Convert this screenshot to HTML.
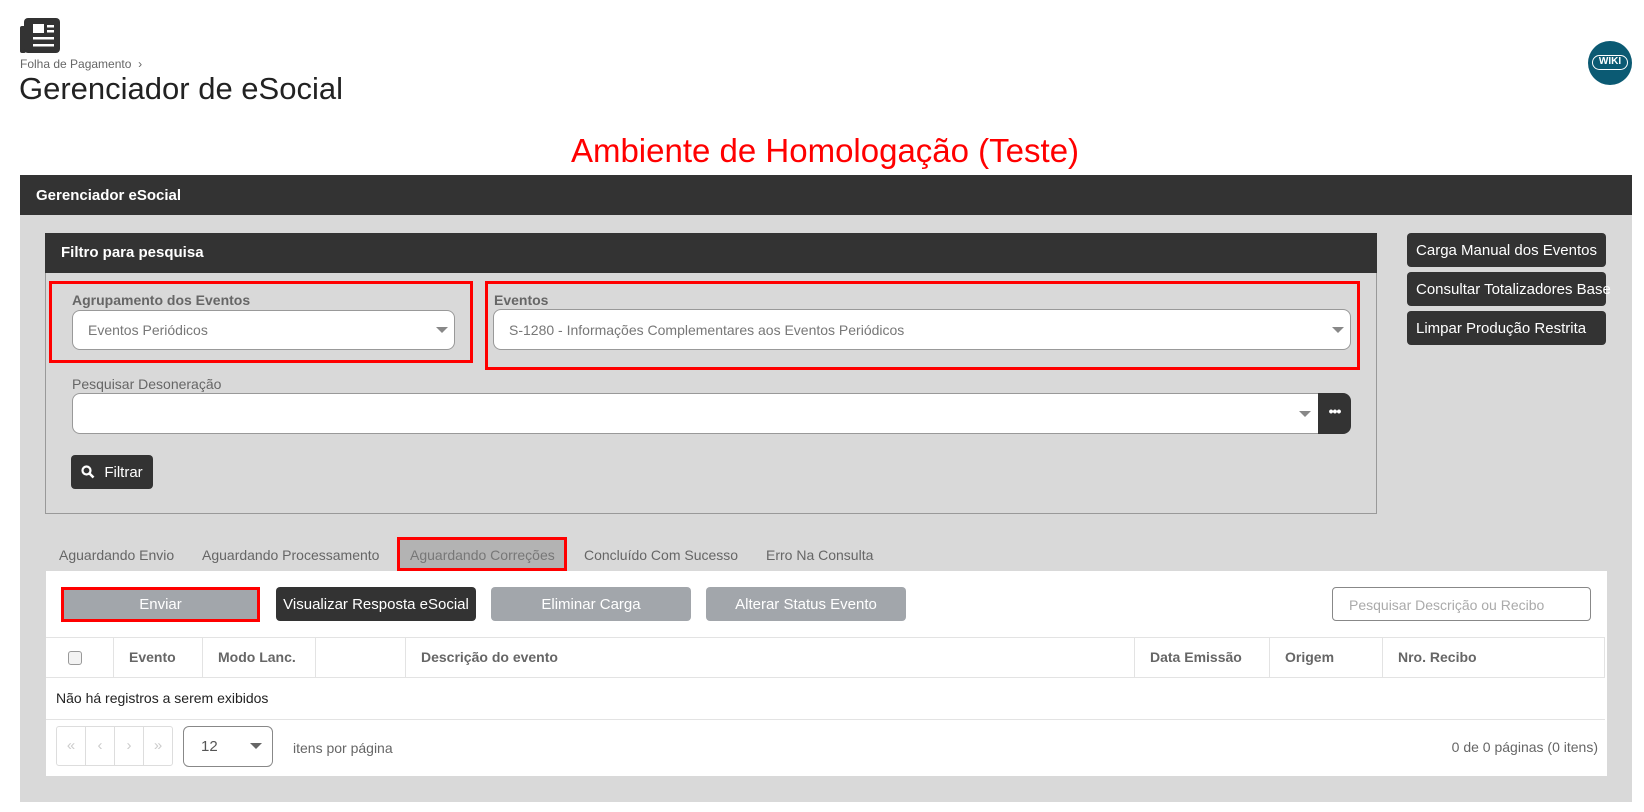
<!DOCTYPE html>
<html><head><meta charset="utf-8">
<style>
*{box-sizing:border-box;margin:0;padding:0}
body{width:1644px;height:812px;background:#fff;font-family:"Liberation Sans",Arial,sans-serif;position:relative;overflow:hidden;color:#333}
.a{position:absolute}
.dark{background:#333;color:#fff}
.btn{position:absolute;border-radius:4px;font-size:15px;display:flex;align-items:center;justify-content:center;white-space:nowrap}
.red{position:absolute;border:3px solid #f00}
.sel{position:absolute;background:#fff;border:1px solid #999;border-radius:8px;font-size:14px;color:#777;display:flex;align-items:center;padding-left:15px}
.tri{position:absolute;width:0;height:0;border-left:6px solid transparent;border-right:6px solid transparent;border-top:6px solid #888}
.lbl{position:absolute;font-size:14px;color:#666}
.th{position:absolute;top:637px;height:40px;border-left:1px solid #e3e3e3;font-size:14px;font-weight:bold;color:#666;display:flex;align-items:center;padding-left:15px}
.tab{position:absolute;top:547px;font-size:14px;color:#666}
</style></head><body>
<svg class="a" style="left:20px;top:18px" width="40" height="35" viewBox="0 0 40 35">
<rect x="0" y="8" width="6" height="27" rx="2" fill="#333"/>
<rect x="4" y="0" width="36" height="35" rx="4" fill="#333"/>
<rect x="13" y="6" width="11" height="9" fill="#fff"/>
<rect x="27" y="7" width="7" height="2.5" fill="#fff"/>
<rect x="27" y="12" width="7" height="2.5" fill="#fff"/>
<rect x="13" y="19" width="21" height="2.5" fill="#fff"/>
<rect x="13" y="26" width="21" height="2.5" fill="#fff"/>
</svg>
<div class="a" style="left:20px;top:57px;font-size:12px;color:#666">Folha de Pagamento &nbsp;›</div>
<div class="a" style="left:19px;top:71px;font-size:31px;color:#222">Gerenciador de eSocial</div>
<div class="a" style="left:1588px;top:41px;width:44px;height:44px;border-radius:50%;background:#0b5a73;overflow:hidden">
<div class="a" style="left:4px;top:14px;width:36px;height:15px;border:1.5px solid #fff;border-radius:8px;color:#fff;font-size:10px;font-weight:bold;text-align:center;line-height:12px">WIKI</div></div>
<div class="a" style="left:0;width:1644px;top:132px;text-align:center;font-size:33px;color:#f00;padding-left:6px">Ambiente de Homologação (Teste)</div>

<div class="a dark" style="left:20px;top:175px;width:1612px;height:40px;font-size:15px;font-weight:bold;padding:12px 16px">Gerenciador eSocial</div>
<div class="a" style="left:20px;top:215px;width:1612px;height:587px;background:#d9d9d9"></div>

<div class="a" style="left:45px;top:233px;width:1332px;height:281px;border:1px solid #999"></div>
<div class="a dark" style="left:45px;top:233px;width:1332px;height:40px;font-size:15px;font-weight:bold;padding:11px 16px">Filtro para pesquisa</div>

<div class="lbl" style="left:72px;top:292px;font-weight:bold">Agrupamento dos Eventos</div>
<div class="sel" style="left:72px;top:310px;width:383px;height:40px">Eventos Periódicos</div>
<div class="tri" style="left:436px;top:327px"></div>
<div class="red" style="left:49px;top:281px;width:424px;height:82px"></div>

<div class="lbl" style="left:494px;top:292px;font-weight:bold">Eventos</div>
<div class="sel" style="left:493px;top:309px;width:858px;height:41px">S-1280 - Informações Complementares aos Eventos Periódicos</div>
<div class="tri" style="left:1332px;top:327px"></div>
<div class="red" style="left:485px;top:281px;width:875px;height:89px"></div>

<div class="lbl" style="left:72px;top:376px">Pesquisar Desoneração</div>
<div class="a" style="left:72px;top:393px;width:1260px;height:41px;background:#fff;border:1px solid #999;border-radius:8px 0 0 8px"></div>
<div class="tri" style="left:1299px;top:411px"></div>
<div class="a dark" style="left:1318px;top:393px;width:33px;height:41px;border-radius:0 8px 8px 0;text-align:center;font-size:14px;font-weight:bold;line-height:36px;letter-spacing:-1px">•••</div>

<div class="btn dark" style="left:71px;top:455px;width:82px;height:34px">
<svg width="14" height="14" viewBox="0 0 14 14" style="margin-right:9px"><circle cx="5.5" cy="5.5" r="4" fill="none" stroke="#fff" stroke-width="2.2"/><path d="M8.5 8.5L12.5 12.5" stroke="#fff" stroke-width="2.6"/></svg>Filtrar</div>

<div class="btn dark" style="left:1407px;top:233px;width:199px;height:34px">Carga Manual dos Eventos</div>
<div class="btn dark" style="left:1407px;top:272px;width:199px;height:34px;justify-content:flex-start;padding-left:9px;overflow:visible">Consultar Totalizadores Base</div>
<div class="btn dark" style="left:1407px;top:311px;width:199px;height:34px;justify-content:flex-start;padding-left:9px">Limpar Produção Restrita</div>

<div class="tab" style="left:59px">Aguardando Envio</div>
<div class="tab" style="left:202px">Aguardando Processamento</div>
<div class="a" style="left:397px;top:537px;width:170px;height:34px;background:#b3b3b3"></div>
<div class="tab" style="left:410px;color:#777">Aguardando Correções</div>
<div class="red" style="left:397px;top:537px;width:170px;height:34px"></div>
<div class="tab" style="left:584px">Concluído Com Sucesso</div>
<div class="tab" style="left:766px">Erro Na Consulta</div>

<div class="a" style="left:46px;top:571px;width:1561px;height:205px;background:#fff"></div>
<div class="btn" style="left:61px;top:587px;width:199px;height:34px;background:#a2a6ab;color:#fff;border-radius:2px">Enviar</div>
<div class="red" style="left:61px;top:587px;width:199px;height:35px"></div>
<div class="btn dark" style="left:276px;top:587px;width:200px;height:34px;font-size:15px">Visualizar Resposta eSocial</div>
<div class="btn" style="left:491px;top:587px;width:200px;height:34px;background:#a2a6ab;color:#fff">Eliminar Carga</div>
<div class="btn" style="left:706px;top:587px;width:200px;height:34px;background:#a2a6ab;color:#fff">Alterar Status Evento</div>
<div class="a" style="left:1332px;top:587px;width:259px;height:34px;border:1px solid #888;border-radius:4px;font-size:14px;color:#aaa;padding:9px 16px">Pesquisar Descrição ou Recibo</div>

<div class="a" style="left:46px;top:637px;width:1559px;height:1px;background:#e3e3e3"></div>
<div class="a" style="left:46px;top:677px;width:1559px;height:1px;background:#e3e3e3"></div>
<div class="a" style="left:68px;top:651px;width:14px;height:14px;border:1px solid #999;border-radius:3px;background:#f3f3f3"></div>
<div class="th" style="left:113px;width:89px">Evento</div>
<div class="th" style="left:202px;width:113px">Modo Lanc.</div>
<div class="th" style="left:315px;width:90px"></div>
<div class="th" style="left:405px;width:729px">Descrição do evento</div>
<div class="th" style="left:1134px;width:135px">Data Emissão</div>
<div class="th" style="left:1269px;width:113px">Origem</div>
<div class="th" style="left:1382px;width:223px;border-right:1px solid #e3e3e3">Nro. Recibo</div>

<div class="a" style="left:56px;top:690px;font-size:14px;color:#222">Não há registros a serem exibidos</div>
<div class="a" style="left:46px;top:719px;width:1559px;height:1px;background:#e3e3e3"></div>

<div class="a" style="left:56px;top:726px;width:117px;height:40px;border:1px solid #ddd;border-radius:3px;display:flex">
<div style="flex:1;border-right:1px solid #ddd;color:#ccc;text-align:center;line-height:38px;font-size:15px">«</div>
<div style="flex:1;border-right:1px solid #ddd;color:#ccc;text-align:center;line-height:38px;font-size:15px">‹</div>
<div style="flex:1;border-right:1px solid #ddd;color:#ccc;text-align:center;line-height:38px;font-size:15px">›</div>
<div style="flex:1;color:#ccc;text-align:center;line-height:38px;font-size:15px">»</div></div>
<div class="a" style="left:183px;top:726px;width:90px;height:41px;border:1px solid #888;border-radius:6px;font-size:15px;color:#555;padding:11px 17px">12</div>
<div class="tri" style="left:250px;top:743px;border-top-color:#666"></div>
<div class="a" style="left:293px;top:740px;font-size:14px;color:#666">itens por página</div>
<div class="a" style="left:1400px;width:198px;top:739px;text-align:right;font-size:14px;color:#666">0 de 0 páginas (0 itens)</div>
</body></html>
